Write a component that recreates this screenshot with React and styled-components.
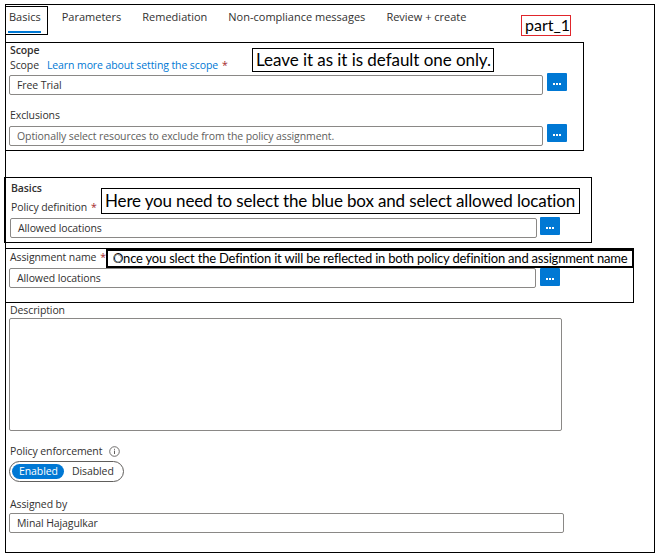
import React from "react";
import styled, { createGlobalStyle } from "styled-components";

const GlobalStyle = createGlobalStyle`
  html, body {
    margin: 0;
    padding: 0;
    background: #fff;
  }
  body {
    font-family: "Open Sans", "Noto Sans", sans-serif;
    color: #323130;
  }
  * {
    box-sizing: border-box;
  }
`;

const Frame = styled.div`
  margin: 4px 0 0 5px;
  width: 650px;
  height: 549px;
  border: 1px solid #000;
  font-size: 10.5px;
  letter-spacing: -0.1px;
`;

const TabBar = styled.div`
  display: flex;
  align-items: flex-start;
  gap: 21px;
  height: 37px;
  padding: 4px 0 0 3px;
  font-size: 11px;
  letter-spacing: 0;
`;

const Tab = styled.div`
  position: relative;
  line-height: 16px;
  padding-bottom: 8px;
  color: #323130;

  ${({ $active }) =>
    $active &&
    `
    &::after {
      content: "";
      position: absolute;
      left: -1px;
      right: 0;
      bottom: 0;
      height: 2px;
      background: #0078d4;
    }
    &::before {
      content: "";
      position: absolute;
      left: -4px;
      right: -7px;
      top: -3px;
      bottom: -2px;
      border: 1px solid #000;
    }
  `}
`;

const PartTag = styled.div`
  margin: 6px 83px 0 auto;
  width: 50px;
  height: 21px;
  border: 1px solid #e0262c;
  font-family: Lato, "Open Sans", sans-serif;
  font-size: 16px;
  line-height: 18px;
  color: #000;
  padding-left: 3px;
`;

const Section = styled.div`
  position: relative;
  width: ${({ $w }) => $w}px;
  height: ${({ $h }) => $h}px;
  margin: ${({ $mt }) => $mt || 0}px 0 0 ${({ $ml }) => $ml || 0}px;
  padding: ${({ $pt }) => $pt || 0}px 0 0 ${({ $pl }) => $pl || 0}px;
  border: 1px solid #000;
`;

const Plain = styled.div`
  padding-left: 3px;
`;

const SectionTitle = styled.div`
  font-weight: 600;
  line-height: ${({ $lh }) => $lh || 16}px;
  padding-left: 1px;
  color: #323130;
`;

const FieldLabel = styled.div`
  line-height: 16px;
  padding-left: 1px;
  margin-top: ${({ $mt }) => $mt || 0}px;
  color: #323130;
`;

const Link = styled.span`
  color: #0078d4;
  margin-left: 8px;
`;

const Required = styled.span`
  color: #a4262c;
  margin-left: 4px;
`;

const FieldRow = styled.div`
  display: flex;
  align-items: flex-start;
  gap: ${({ $gap }) => $gap || 4}px;
  margin-top: ${({ $mt }) => $mt || 0}px;
`;

const TextBox = styled.div`
  width: ${({ $w }) => $w}px;
  height: 20px;
  margin-top: ${({ $offset }) => $offset || 0}px;
  border: 1px solid #8a8886;
  border-radius: 2px;
  padding-left: 7px;
  line-height: 18px;
  color: ${({ $placeholder }) => ($placeholder ? "#605e5c" : "#323130")};
  white-space: nowrap;
  overflow: hidden;
`;

const PickerButton = styled.div`
  width: 20px;
  height: 18px;
  background: #0078d4;
  border-radius: 1px;
  display: flex;
  align-items: flex-end;
  justify-content: center;
  padding-bottom: 6px;
`;

const TextArea = styled.div`
  width: 553px;
  height: 113px;
  border: 1px solid #8a8886;
  border-radius: 2px;
`;

const Toggle = styled.div`
  display: flex;
  align-items: center;
  width: 115px;
  height: 21px;
  margin-top: 2px;
  padding-left: 2px;
  border: 1px solid #605e5c;
  border-radius: 11px;
`;

const ToggleOption = styled.div`
  height: 15px;
  line-height: 15px;
  padding: 0 ${({ $active }) => ($active ? "7px" : "8px")};
  border-radius: 8px;
  background: ${({ $active }) => ($active ? "#0078d4" : "transparent")};
  color: ${({ $active }) => ($active ? "#fff" : "#323130")};
  width: ${({ $active }) => ($active ? "52px" : "auto")};
`;

const LabelWithIcon = styled.div`
  display: flex;
  align-items: center;
  gap: 7px;
  line-height: 16px;
  padding-left: 1px;
  margin-top: 12px;
`;

const Note = styled.div`
  position: absolute;
  left: ${({ $x }) => $x}px;
  top: ${({ $y }) => $y}px;
  width: ${({ $w }) => $w}px;
  height: ${({ $h }) => $h}px;
  border: ${({ $bw }) => $bw || 1}px solid #000;
  background: #fff;
  font-family: Lato, "Open Sans", sans-serif;
  font-size: ${({ $fs }) => $fs}px;
  letter-spacing: ${({ $ls }) => $ls || 0}px;
  line-height: ${({ $h, $bw }) => $h - 2 * ($bw || 1)}px;
  padding-left: ${({ $pl }) => $pl || 3}px;
  color: #000;
  white-space: nowrap;
`;

const Cursor = styled.span`
  position: absolute;
  left: 5px;
  top: 3px;
  width: 9px;
  height: 9px;
  border: 1px solid #8a8a8a;
  border-radius: 50%;
`;

const Dots = () => (
  <svg width="8" height="2" viewBox="0 0 8 2">
    <rect x="0" y="0" width="2" height="2" fill="#fff" />
    <rect x="3" y="0" width="2" height="2" fill="#fff" />
    <rect x="6" y="0" width="2" height="2" fill="#fff" />
  </svg>
);

const InfoIcon = () => (
  <svg width="11" height="11" viewBox="0 0 11 11">
    <circle cx="5.5" cy="5.5" r="4.8" fill="none" stroke="#605e5c" strokeWidth="0.9" />
    <rect x="5" y="4.6" width="1" height="3.4" fill="#605e5c" />
    <rect x="5" y="2.8" width="1" height="1" fill="#605e5c" />
  </svg>
);

const tabs = [
  "Basics",
  "Parameters",
  "Remediation",
  "Non-compliance messages",
  "Review + create",
];

export default function App() {
  return (
    <>
      <GlobalStyle />
      <Frame>
        <TabBar>
          {tabs.map((t, i) => (
            <Tab key={t} $active={i === 0}>
              {t}
            </Tab>
          ))}
          <PartTag>part_1</PartTag>
        </TabBar>

        <Section $w={579} $h={109} $ml={-1} $pl={3}>
          <SectionTitle $lh={14}>Scope</SectionTitle>
          <FieldLabel>
            Scope<Link>Learn more about setting the scope</Link>
            <Required>*</Required>
          </FieldLabel>
          <FieldRow $gap={4}>
            <TextBox $w={534} $offset={2}>
              Free Trial
            </TextBox>
            <PickerButton>
              <Dots />
            </PickerButton>
          </FieldRow>
          <FieldLabel $mt={12}>Exclusions</FieldLabel>
          <FieldRow $gap={4} $mt={1}>
            <TextBox $w={534} $offset={2} $placeholder>
              Optionally select resources to exclude from the policy assignment.
            </TextBox>
            <PickerButton>
              <Dots />
            </PickerButton>
          </FieldRow>
          <Note $x={246} $y={5} $w={242} $h={24} $fs={17} $ls={-0.05}>
            Leave it as it is default one only.
          </Note>
        </Section>

        <Section $w={588} $h={66} $ml={-2} $mt={26} $pl={5} $pt={2}>
          <SectionTitle>Basics</SectionTitle>
          <FieldLabel $mt={3}>
            Policy definition<Required>*</Required>
          </FieldLabel>
          <FieldRow $gap={3} $mt={2}>
            <TextBox $w={527} $offset={1}>
              Allowed locations
            </TextBox>
            <PickerButton>
              <Dots />
            </PickerButton>
          </FieldRow>
          <Note $x={96} $y={10} $w={479} $h={26} $fs={17} $ls={-0.15}>
            Here you need to select the blue box and select allowed location
          </Note>
        </Section>

        <Section $w={629} $h={55} $ml={-1} $mt={5} $pl={3}>
          <FieldLabel>
            Assignment name<Required>*</Required>
          </FieldLabel>
          <FieldRow $gap={4} $mt={3}>
            <TextBox $w={527}>Allowed locations</TextBox>
            <PickerButton>
              <Dots />
            </PickerButton>
          </FieldRow>
          <Note
            $x={100}
            $y={0}
            $w={528}
            $h={19}
            $bw={2}
            $fs={13}
            $ls={-0.2}
            $pl={5}
          >
            <Cursor />
            Once you slect the Defintion it will be reflected in both policy
            definition and assignment name
          </Note>
        </Section>

        <Plain>
          <FieldLabel $mt={-1}>Description</FieldLabel>
          <TextArea />
          <LabelWithIcon>
            Policy enforcement
            <InfoIcon />
          </LabelWithIcon>
          <Toggle>
            <ToggleOption $active>Enabled</ToggleOption>
            <ToggleOption>Disabled</ToggleOption>
          </Toggle>
          <FieldLabel $mt={14}>Assigned by</FieldLabel>
          <FieldRow $mt={1}>
            <TextBox $w={555}>Minal Hajagulkar</TextBox>
          </FieldRow>
        </Plain>
      </Frame>
    </>
  );
}
